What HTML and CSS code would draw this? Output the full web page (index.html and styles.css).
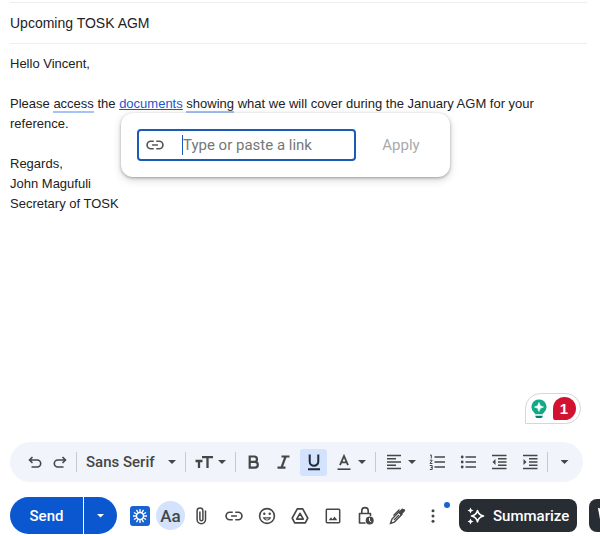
FILE: index.html
```html
<!DOCTYPE html>
<html lang="en">
<head>
<meta charset="utf-8">
<meta name="viewport" content="width=device-width, initial-scale=1">
<title>Upcoming TOSK AGM</title>
<link rel="stylesheet" href="styles.css">
</head>
<body>
<main class="compose">
  <header class="subject">
    <input class="subject-input" type="text" aria-label="Subject" value="Upcoming TOSK AGM">
  </header>

  <section class="message" aria-label="Message body">
    <p>Hello Vincent,</p>
    <p>Please <span class="hint">access</span> the <a href="#">documents</a> <span class="hint">showing</span> what we will cover during the January AGM for your reference.</p>
    <p>Regards,<br>John Magufuli<br>Secretary of TOSK</p>
    <div class="link-popup">
      <label class="link-field">
        <svg width="20" height="20" viewBox="0 0 24 24" aria-hidden="true"><path d="M10.500 7.500H7a4.500 4.500 0 0 0 0 9h3.500M13.500 7.500H17a4.500 4.500 0 0 1 0 9h-3.500M8.500 12h7" fill="none" stroke="currentColor" stroke-width="2"/></svg>
        <span class="text-cursor"></span>
        <input class="link-input" type="text" aria-label="Link address" placeholder="Type or paste a link">
      </label>
      <button class="apply" type="button">Apply</button>
    </div>
  </section>

  <button class="assistant" type="button" aria-label="Writing suggestions">
    <svg width="16" height="20" viewBox="0 0 16 20" aria-hidden="true"><path d="M8 .5a7.500 7.500 0 0 0-4.600 13.400c.6.500.8.700.8 1.300h7.600c0-.6.2-.8.8-1.300A7.500 7.500 0 0 0 8 .5Z" fill="#12a989"/><path d="M8 3.500 9.300 6.700 12.500 8 9.300 9.300 8 12.500 6.700 9.300 3.500 8 6.700 6.700Z" fill="#fff" stroke="#fff" stroke-width=".6"/><path d="M4.200 16.700h7.600c-.3 1.500-1.200 2.300-2 2.300H6.200c-.8 0-1.700-.8-2-2.300Z" fill="#087a67"/></svg>
    <span class="count">1</span>
  </button>

  <div class="format-bar" role="toolbar" aria-label="Formatting options">
    <div class="history">
      <button class="tool narrow" type="button" aria-label="Undo"><svg width="18" height="18" viewBox="0 0 18 18" aria-hidden="true"><path d="M6.500 4 3.500 7l3 3M3.500 7h7.700a3.500 3.500 0 0 1 0 7H5.500" fill="none" stroke="currentColor" stroke-width="1.600"/></svg></button>
      <button class="tool narrow" type="button" aria-label="Redo"><svg width="18" height="18" viewBox="0 0 18 18" aria-hidden="true"><path d="m11.500 4 3 3-3 3M14.500 7H6.800a3.500 3.500 0 0 0 0 7h5.700" fill="none" stroke="currentColor" stroke-width="1.600"/></svg></button>
    </div>
    <span class="separator"></span>
    <label class="font-picker">
      <select aria-label="Font"><option>Sans Serif</option></select>
      <span class="caret"></span>
    </label>
    <span class="separator"></span>
    <button class="tool wide" type="button" aria-label="Size"><svg width="18" height="18" viewBox="0 0 18 18" aria-hidden="true"><path d="M7 4.200h11M12.500 4.200V15M.5 8h7M4 8v7" fill="none" stroke="currentColor" stroke-width="2.300"/></svg><span class="caret"></span></button>
    <span class="separator"></span>
    <div class="styles">
      <button class="tool" type="button" aria-label="Bold"><svg width="18" height="18" viewBox="0 0 18 18" aria-hidden="true"><path d="M4.700 3.500h4.600a2.600 2.600 0 0 1 0 5.300H4.700zM4.700 8.800h5.200a2.900 2.900 0 0 1 0 5.800H4.700z" fill="none" stroke="currentColor" stroke-width="2.200"/></svg></button>
      <button class="tool" type="button" aria-label="Italic"><svg width="18" height="18" viewBox="0 0 18 18" aria-hidden="true"><path d="M6.500 3.500h8M2.500 14.600h8M10.600 3.500 6.500 14.600" fill="none" stroke="currentColor" stroke-width="2.200"/></svg></button>
      <button class="tool active" type="button" aria-label="Underline" aria-pressed="true"><svg width="18" height="18" viewBox="0 0 18 18" aria-hidden="true"><path d="M4.700 1.500v6.900a4.300 4.300 0 0 0 8.600 0V1.500M3 16.200h12" fill="none" stroke="currentColor" stroke-width="2"/></svg></button>
      <button class="tool wide" type="button" aria-label="Text color"><svg width="18" height="18" viewBox="0 0 18 18" aria-hidden="true"><path d="M5 12.200 9 3 13 12.200M6.300 9.300h5.400" fill="none" stroke="currentColor" stroke-width="1.800"/><path d="M2.500 16.200h13" stroke="currentColor" stroke-width="1.600"/></svg><span class="caret"></span></button>
    </div>
    <span class="separator"></span>
    <button class="tool wide" type="button" aria-label="Align"><svg width="18" height="18" viewBox="0 0 18 18" aria-hidden="true"><path d="M2 2.500h14M2 5.700h9M2 9h14M2 12.300h9M2 15.500h14" stroke="currentColor" stroke-width="1.500"/></svg><span class="caret"></span></button>
    <div class="lists">
      <button class="tool" type="button" aria-label="Numbered list"><svg width="18" height="18" viewBox="0 0 18 18" aria-hidden="true"><path d="M6.500 4H17M6.500 9H17M6.500 14H17" stroke="currentColor" stroke-width="1.600"/><path d="M2 2h1.300v3.500M1.800 7.200h2.400L2 10.500h2.400M1.800 12.500h2.400v4H1.800M2.700 14.500h1.500" fill="none" stroke="currentColor"/></svg></button>
      <button class="tool" type="button" aria-label="Bulleted list"><svg width="18" height="18" viewBox="0 0 18 18" aria-hidden="true"><path d="M6.500 4H17M6.500 9H17M6.500 14H17" stroke="currentColor" stroke-width="1.600"/><g fill="currentColor"><circle cx="3.200" cy="4" r="1.400"/><circle cx="3.200" cy="9" r="1.400"/><circle cx="3.200" cy="14" r="1.400"/></g></svg></button>
      <button class="tool" type="button" aria-label="Indent less"><svg width="18" height="18" viewBox="0 0 18 18" aria-hidden="true"><path d="M2 2.500h14.500M8 5.700h8.500M8 9h8.500M8 12.300h8.500M2 15.500h14.500" stroke="currentColor" stroke-width="1.500"/><path d="M5.500 6v6l-3-3z" fill="currentColor"/></svg></button>
      <button class="tool" type="button" aria-label="Indent more"><svg width="18" height="18" viewBox="0 0 18 18" aria-hidden="true"><path d="M2 2.500h14.500M8 5.700h8.500M8 9h8.500M8 12.300h8.500M2 15.500h14.500" stroke="currentColor" stroke-width="1.500"/><path d="M2.500 6v6l3-3z" fill="currentColor"/></svg></button>
    </div>
    <span class="separator"></span>
    <button class="tool narrow" type="button" aria-label="More formatting options"><span class="caret"></span></button>
  </div>

  <footer class="actions">
    <div class="send-group">
      <button class="send" type="button">Send</button>
      <button class="send-more" type="button" aria-label="More send options"><span class="caret"></span></button>
    </div>
    <button class="action extension" type="button" aria-label="Extension"><svg width="20" height="20" viewBox="0 0 20 20" aria-hidden="true"><rect width="20" height="20" rx="3" fill="#1763d1"/><path d="M10 3v4M10 13v4M3 10h4M13 10h4M6.500 3.900l2 3.500M11.500 12.600l2 3.500M13.500 3.900l-2 3.500M8.500 12.600l-2 3.500M3.900 6.500l3.500 2M12.600 11.500l3.500 2M3.900 13.500l3.500-2M12.600 8.500l3.500-2" stroke="#fff" stroke-width="1.300"/><circle cx="10" cy="10" r="3.500" fill="none" stroke="#fff" stroke-width="1.300"/></svg></button>
    <button class="action formatting" type="button" aria-label="Formatting options" aria-pressed="true">Aa</button>
    <div class="inserts">
      <button class="action" type="button" aria-label="Attach files"><svg width="20" height="20" viewBox="0 0 20 20" aria-hidden="true"><path d="M14.500 4.500v9a4.200 4.200 0 0 1-8.400 0V4.800a2.900 2.900 0 0 1 5.800 0v8.400a1.500 1.500 0 0 1-3 0V5.500" fill="none" stroke="currentColor" stroke-width="1.500"/></svg></button>
      <button class="action" type="button" aria-label="Insert link"><svg width="20" height="20" viewBox="0 0 24 24" aria-hidden="true"><path d="M10.500 7.500H7a4.500 4.500 0 0 0 0 9h3.500M13.500 7.500H17a4.500 4.500 0 0 1 0 9h-3.500M8.500 12h7" fill="none" stroke="currentColor" stroke-width="2"/></svg></button>
      <button class="action" type="button" aria-label="Insert emoji"><svg width="20" height="20" viewBox="0 0 20 20" aria-hidden="true"><circle cx="10" cy="10" r="7.400" fill="none" stroke="currentColor" stroke-width="1.600"/><circle cx="7.300" cy="7.800" r="1.200" fill="currentColor"/><circle cx="12.700" cy="7.800" r="1.200" fill="currentColor"/><path d="M5.800 11.300h8.400a4.400 4.400 0 0 1-8.400 0Zm2 1.300a2.800 2.800 0 0 0 4.400 0Z" fill="currentColor" fill-rule="evenodd"/></svg></button>
      <button class="action" type="button" aria-label="Insert from Drive"><svg width="20" height="20" viewBox="0 0 20 20" aria-hidden="true"><path d="M7.300 2.800h5.400l5.100 9.400-2.500 4.600H4.700l-2.500-4.600Z" fill="none" stroke="currentColor" stroke-width="1.700" stroke-linejoin="round"/><path d="m10 7.300 3.300 5.800H6.700Z" fill="none" stroke="currentColor" stroke-width="1.700" stroke-linejoin="round"/></svg></button>
      <button class="action" type="button" aria-label="Insert photo"><svg width="20" height="20" viewBox="0 0 20 20" aria-hidden="true"><rect x="3.300" y="3.300" width="13.400" height="13.400" rx="1" fill="none" stroke="currentColor" stroke-width="1.500"/><path d="m5.700 14.300 2.300-3 1.500 1.900 2-2.600 2.800 3.700Z" fill="currentColor"/></svg></button>
      <button class="action" type="button" aria-label="Confidential mode"><svg width="20" height="20" viewBox="0 0 20 20" aria-hidden="true"><path d="M9.500 17H3.500V7.500h11V10M5.800 7.500V4.800a3.200 3.200 0 0 1 6.400 0v2.700" fill="none" stroke="currentColor" stroke-width="1.600" stroke-linejoin="round"/><circle cx="13.700" cy="14.500" r="4" fill="currentColor"/><path d="M13.500 12v2.700l1.700 1.200" fill="none" stroke="#fff"/></svg></button>
      <button class="action" type="button" aria-label="Insert signature"><svg width="20" height="20" viewBox="0 0 20 20" aria-hidden="true"><path d="M1.500 17.500 3 13l7-7.300 2.800 2.700-7.500 7.800Z" fill="none" stroke="currentColor" stroke-width="1.400"/><path d="M9 6.500 12.500 3c.7-.7 1.500-.4 1.800.2.800-.8 2.600.7 1.700 1.800L12 9.500Z" fill="currentColor"/><path d="M4.500 9.500 10.500 3.500M5 14l5-5" fill="none" stroke="currentColor" stroke-width="1.300"/></svg></button>
    </div>
    <button class="action more" type="button" aria-label="More options"><svg width="20" height="20" viewBox="0 0 20 20" aria-hidden="true"><g fill="currentColor"><circle cx="10" cy="4.700" r="1.500"/><circle cx="10" cy="10" r="1.500"/><circle cx="10" cy="15.300" r="1.500"/></g></svg><span class="notice"></span></button>
    <button class="chip" type="button"><svg width="18" height="18" viewBox="0 0 18 18" aria-hidden="true"><path d="M10.500 3.500Q11.500 8 16.500 9 11.500 10 10.500 14.800 9.500 10 4.500 9 9.500 8 10.500 3.500Z" fill="none" stroke="currentColor" stroke-width="1.600" stroke-linejoin="round"/><path d="M3.500.5 4.400 2.600 6.500 3.500 4.400 4.400 3.500 6.500 2.600 4.400.5 3.500 2.600 2.600ZM3.500 11.500l.9 2.100 2.100.9-2.100.9-.9 2.100-.9-2.100-2.100-.9 2.100-.9Z" fill="currentColor"/></svg>Summarize</button>
    <button class="chip" type="button" aria-label="Write"><svg width="18" height="18" viewBox="0 0 18 18" aria-hidden="true"><path d="M2 2 4 13 15 16 12 5Z" fill="none" stroke="currentColor" stroke-width="1.700"/></svg></button>
  </footer>
</main>
</body>
</html>
```
FILE: styles.css
```css
* {
  box-sizing: border-box;
}

body {
  margin: 0;
  background: #fff;
  color: #222;
  font-family: "Liberation Sans", Arial, sans-serif;
  font-size: 13px;
  overflow: hidden;
}

button,
input,
select {
  margin: 0;
  padding: 0;
  border: 0;
  background: none;
  color: inherit;
  font: inherit;
  outline: none;
}

button {
  display: flex;
  align-items: center;
  justify-content: center;
  flex: none;
}

svg {
  display: block;
  flex: none;
}

.compose {
  display: flex;
  flex-direction: column;
  min-height: 100vh;
  padding-top: 2px;
}

.subject {
  margin: 0 13px 0 10px;
  border-top: 1px solid #eee;
  border-bottom: 1px solid #eee;
}

.subject-input {
  display: block;
  width: 100%;
  height: 40px;
  font-size: 14px;
}

.message {
  position: relative;
  flex: 1;
  padding: 10px 40px 0 10px;
  line-height: 20px;
}

.message p {
  margin: 0 0 20px;
}

.message a {
  color: #1f55cc;
}

.hint {
  border-bottom: 2px solid #a5c3f5;
}

.link-popup {
  position: absolute;
  z-index: 1;
  top: 69px;
  left: 121px;
  display: flex;
  align-items: center;
  padding: 16px;
  border-radius: 12px;
  background: #fff;
  box-shadow: 0 1px 3px rgba(0, 0, 0, 0.3), 0 3px 8px rgba(0, 0, 0, 0.16);
  font-family: Roboto, sans-serif;
  font-size: 15px;
}

.link-field {
  display: flex;
  align-items: center;
  width: 219px;
  height: 32px;
  padding-left: 6px;
  border: 2px solid #1b5ab5;
  border-radius: 4px;
  color: #555;
}

.text-cursor {
  width: 1px;
  height: 20px;
  margin-left: 17px;
  background: #1b5ab5;
}

.link-input {
  flex: 1;
  min-width: 0;
}

.link-input::placeholder {
  color: #777;
  opacity: 1;
}

.apply {
  width: 78px;
  height: 32px;
  padding-left: 12px;
  color: #aaa;
}

.assistant {
  align-self: flex-end;
  gap: 6px;
  width: 56px;
  height: 31px;
  margin: 0 19px 18px 0;
  border: 1px solid #d5d5da;
  border-radius: 16px 16px 16px 0;
  background: #fff;
}

.count {
  width: 23px;
  height: 23px;
  border-radius: 12px 12px 12px 3px;
  background: #d3122f;
  color: #fff;
  font-weight: bold;
  font-size: 15px;
  line-height: 23px;
}

.format-bar {
  display: flex;
  align-items: center;
  height: 40px;
  margin: 0 17px 0 10px;
  padding: 0 12px;
  border-radius: 20px;
  background: #f1f5fb;
  color: #444746;
}

.history,
.styles,
.lists,
.inserts {
  display: flex;
  align-items: center;
}

.styles {
  gap: 3px;
}

.lists {
  gap: 4px;
  margin-left: 2px;
}

.separator {
  flex: none;
  width: 1px;
  height: 20px;
  margin: 0 4px;
  background: #c7cacf;
}

.tool {
  width: 27px;
  height: 27px;
  border-radius: 3px;
}

.tool.narrow {
  width: 25px;
}

.tool.wide {
  gap: 5px;
  width: 41px;
}

.tool.active {
  background: #d3e3fd;
  color: #1f2937;
}

.caret {
  flex: none;
  width: 8px;
  height: 4px;
  background: currentColor;
  clip-path: polygon(0 0, 100% 0, 50% 100%);
}

.font-picker {
  display: flex;
  align-items: center;
  flex: none;
  width: 100px;
  padding: 0 5px;
}

.font-picker select {
  flex: 1;
  min-width: 0;
  appearance: none;
  font-family: Roboto, sans-serif;
  font-size: 15px;
  font-weight: 500;
}

.actions {
  display: flex;
  align-items: center;
  height: 37px;
  margin-top: 15px;
  margin-bottom: 2px;
  padding-left: 10px;
  color: #444746;
}

.send-group {
  display: flex;
  flex: none;
  gap: 1px;
  color: #fff;
}

.send,
.send-more {
  height: 37px;
  background: #0b57d0;
}

.send {
  width: 73px;
  border-radius: 19px 0 0 19px;
  font-family: Roboto, sans-serif;
  font-size: 15px;
  font-weight: 500;
}

.send-more {
  width: 33px;
  border-radius: 0 19px 19px 0;
}

.action {
  width: 28px;
  height: 29px;
}

.extension {
  margin-left: 9px;
}

.formatting {
  width: 29px;
  margin: 0 2px;
  border-radius: 50%;
  background: #d3e3fd;
  font-family: Roboto, sans-serif;
  font-size: 17px;
  font-weight: 500;
}

.inserts {
  gap: 5px;
}

.more {
  position: relative;
  margin-left: 6px;
}

.notice {
  position: absolute;
  top: 1px;
  right: -3px;
  width: 6px;
  height: 6px;
  border-radius: 50%;
  background: #1763d1;
}

.chip {
  gap: 8px;
  height: 33px;
  margin-left: 12px;
  padding: 0 8px;
  border-radius: 8px;
  background: #282c33;
  color: #fff;
  font-family: Roboto, sans-serif;
  font-size: 15px;
  font-weight: 500;
}
```
